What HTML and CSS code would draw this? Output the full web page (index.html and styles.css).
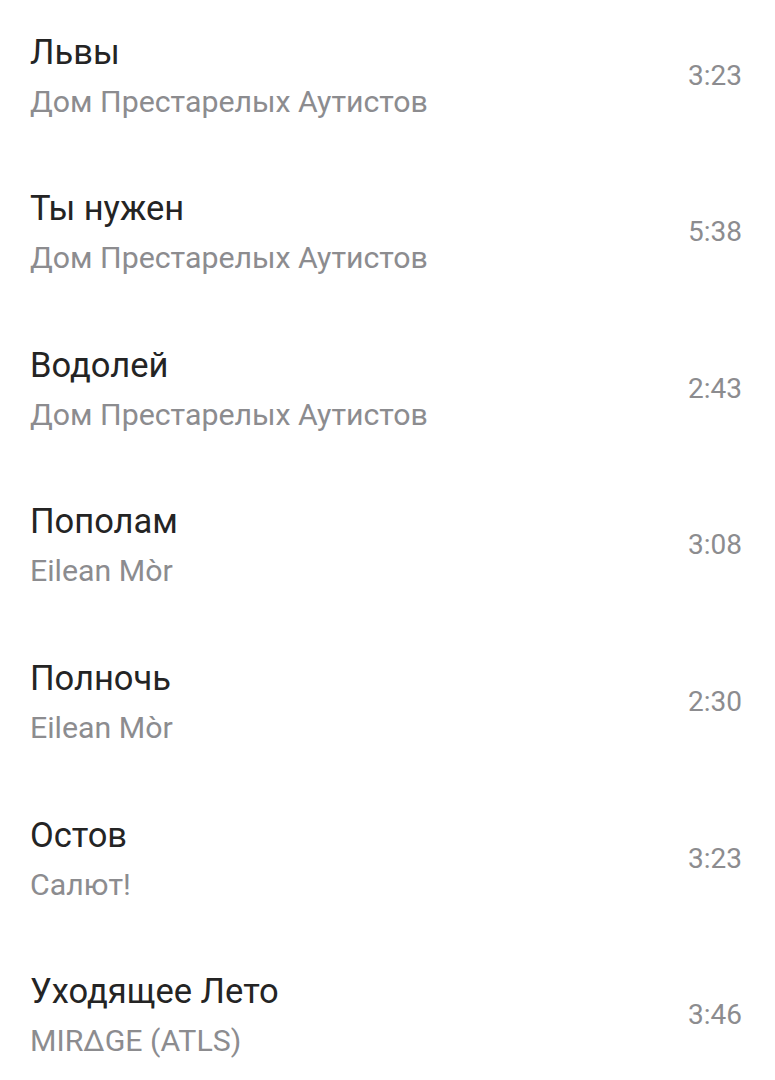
FILE: index.html
```html
<!DOCTYPE html>
<html lang="ru">
<head>
<meta charset="utf-8">
<link rel="stylesheet" href="styles.css">
</head>
<body>
<ul class="tracks">
  <li class="track"><div class="info"><div class="title">Львы</div><div class="artist">Дом Престарелых Аутистов</div></div><div class="time">3:23</div></li>
  <li class="track"><div class="info"><div class="title">Ты нужен</div><div class="artist">Дом Престарелых Аутистов</div></div><div class="time">5:38</div></li>
  <li class="track"><div class="info"><div class="title">Водолей</div><div class="artist">Дом Престарелых Аутистов</div></div><div class="time">2:43</div></li>
  <li class="track"><div class="info"><div class="title">Пополам</div><div class="artist">Eilean Mòr</div></div><div class="time">3:08</div></li>
  <li class="track"><div class="info"><div class="title">Полночь</div><div class="artist">Eilean Mòr</div></div><div class="time">2:30</div></li>
  <li class="track"><div class="info"><div class="title">Остов</div><div class="artist">Салют!</div></div><div class="time">3:23</div></li>
  <li class="track"><div class="info"><div class="title">Уходящее Лето</div><div class="artist">MIRΔGE (ATLS)</div></div><div class="time">3:46</div></li>
</ul>
</body>
</html>
```
FILE: styles.css
```css
html, body {
  margin: 0;
  padding: 0;
  background: #ffffff;
}
body {
  font-family: Roboto, "Noto Sans", sans-serif;
  width: 775px;
  height: 1080px;
  overflow: hidden;
}
.tracks {
  list-style: none;
  margin: 0;
  padding: 0;
}
.track {
  box-sizing: border-box;
  height: 156.67px;
  padding: 31.5px 33px 0 30px;
  display: flex;
  align-items: flex-start;
  justify-content: space-between;
}
.info {
  display: flex;
  flex-direction: column;
}
.title {
  font-size: 34.5px;
  line-height: 40px;
  color: #242424;
}
.artist {
  font-size: 30.3px;
  line-height: 36px;
  margin-top: 12px;
  color: #8c8c8f;
}
.time {
  font-size: 28px;
  line-height: 32px;
  color: #8c8c8f;
  margin-top: 28px;
}
```
